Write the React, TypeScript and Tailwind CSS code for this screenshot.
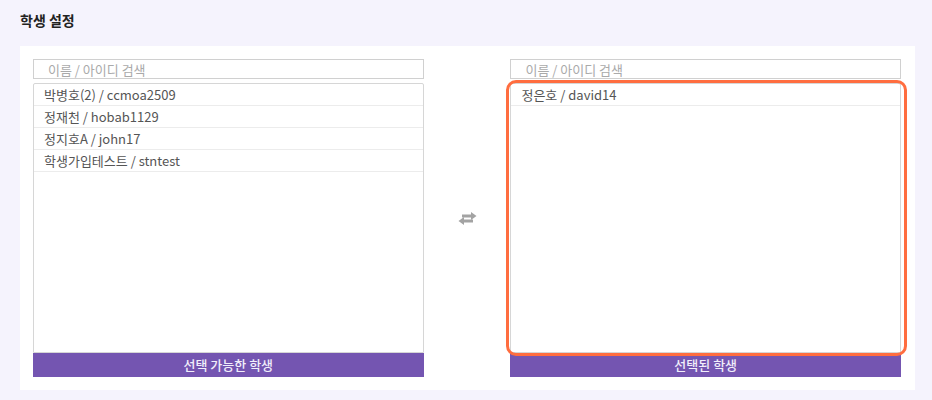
import React from "react";

type Student = { name: string; id: string };

const available: Student[] = [
  { name: "박병호(2)", id: "ccmoa2509" },
  { name: "정재천", id: "hobab1129" },
  { name: "정지호A", id: "john17" },
  { name: "학생가입테스트", id: "stntest" },
];

const selected: Student[] = [{ name: "정은호", id: "david14" }];

// two opposing arrows, used between the lists
const SwapIcon: React.FC = () => (
  <svg width="19" height="13" viewBox="0 0 19 13" fill="#a3a3a3">
    <path d="M4 2.5h9V0l5.5 4L13 8V5.5H4z" />
    <path d="M15 7.5H6V5L0.5 9 6 13v-2.5h9z" />
  </svg>
);

const StudentColumn: React.FC<{
  items: Student[];
  label: string;
  highlight?: boolean;
}> = ({ items, label, highlight }) => {
  return (
    <div className="flex w-[391px] flex-col">
      <input
        type="text"
        placeholder="이름 / 아이디 검색"
        className="h-[20px] w-full border border-[#d0d0d0] bg-white pl-[14px] text-[13px] leading-[18px] text-[#555] outline-none placeholder:text-[#aaa]"
      />
      <div className="relative mt-[4px]">
        <ul className="h-[270px] rounded-t-[2px] border border-[#d6d6d6] bg-white">
          {items.map((s) => (
            <li
              key={s.id}
              className="flex h-[22px] items-center border-b border-[#ececec] pl-[10px] text-[13px] text-[#555]"
            >
              {s.name} / {s.id}
            </li>
          ))}
        </ul>
        {highlight && (
          <div className="pointer-events-none absolute -top-[3px] -bottom-[3px] -left-[4px] -right-[6px] rounded-[10px] border-[3px] border-[#ff6d3f]" />
        )}
      </div>
      <div className="flex h-[24px] items-center justify-center bg-[#7455b1] text-[13px] font-medium text-[#f1eefb]">
        {label}
      </div>
    </div>
  );
};

const App: React.FC = () => {
  return (
    <div
      className="h-[400px] w-[932px] bg-[#f5f3fd] px-[20px]"
      style={{ fontFamily: '"Noto Sans CJK KR", "Noto Sans", sans-serif' }}
    >
      <h2 className="pt-[11px] pb-[17px] text-[14px] leading-[18px] font-bold text-[#222]">
        학생 설정
      </h2>
      <div className="flex w-[895px] items-stretch bg-white pt-[13px] pr-[14px] pb-[13px] pl-[13px]">
        <StudentColumn items={available} label="선택 가능한 학생" />
        <div className="flex w-[87px] items-center justify-center">
          <SwapIcon />
        </div>
        <StudentColumn items={selected} label="선택된 학생" highlight />
      </div>
    </div>
  );
};

export default App;
